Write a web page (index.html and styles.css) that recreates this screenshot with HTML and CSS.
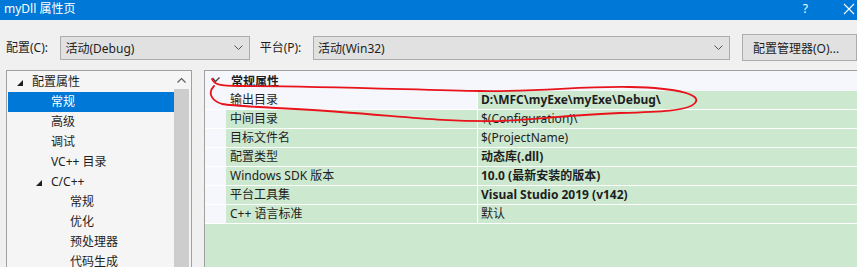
FILE: index.html
```html
<!DOCTYPE html>
<html lang="zh-CN">
<head>
  <meta charset="UTF-8">
  <title>myDll 属性页</title>
  <link rel="stylesheet" href="styles.css">
</head>
<body>
  <div class="window">
    <div class="titlebar">
      <span class="title">myDll 属性页</span>
      <span class="help">?</span>
      <svg class="close" width="12" height="12" viewBox="0 0 12 12">
        <path d="M1 1 L11 11 M11 1 L1 11" stroke="#fff" stroke-width="1.1" fill="none"/>
      </svg>
    </div>

    <div class="toolbar">
      <span class="label label-config">配置(C):</span>
      <div class="combo combo-config">
        <span>活动(Debug)</span>
        <svg class="combo-arrow" width="9" height="5" viewBox="0 0 9 5"><path d="M0.5 0.5 L4.5 4.5 L8.5 0.5" stroke="#555" fill="none"/></svg>
      </div>
      <span class="label label-platform">平台(P):</span>
      <div class="combo combo-platform">
        <span>活动(Win32)</span>
        <svg class="combo-arrow" width="9" height="5" viewBox="0 0 9 5"><path d="M0.5 0.5 L4.5 4.5 L8.5 0.5" stroke="#555" fill="none"/></svg>
      </div>
      <button class="btn-manager">配置管理器(O)...</button>
    </div>

    <div class="main">
      <div class="tree">
        <ul class="tree-list">
          <li class="lv0"><span class="tri"></span>配置属性</li>
          <li class="lv1 selected">常规</li>
          <li class="lv1">高级</li>
          <li class="lv1">调试</li>
          <li class="lv1">VC++ 目录</li>
          <li class="lv1 has-tri"><span class="tri"></span>C/C++</li>
          <li class="lv2">常规</li>
          <li class="lv2">优化</li>
          <li class="lv2">预处理器</li>
          <li class="lv2">代码生成</li>
        </ul>
        <div class="scrollbar">
          <div class="scroll-up">
            <svg width="9" height="5" viewBox="0 0 9 5"><path d="M0.5 4.5 L4.5 0.5 L8.5 4.5" stroke="#606060" stroke-width="1.2" fill="none"/></svg>
          </div>
          <div class="scroll-thumb"></div>
        </div>
      </div>

      <div class="grid">
        <div class="grid-header">
          <svg class="chevron" width="8" height="6" viewBox="0 0 8 6"><path d="M0.5 1 L3.5 4.5 L7.5 0.5" stroke="#444" stroke-width="1.3" fill="none"/></svg>
          <span>常规属性</span>
        </div>
        <div class="row first">
          <div class="gutter"></div>
          <div class="name">输出目录</div>
          <div class="value bold">D:\MFC\myExe\myExe\Debug\</div>
        </div>
        <div class="row">
          <div class="gutter"></div>
          <div class="name">中间目录</div>
          <div class="value">$(Configuration)\</div>
        </div>
        <div class="row">
          <div class="gutter"></div>
          <div class="name">目标文件名</div>
          <div class="value">$(ProjectName)</div>
        </div>
        <div class="row">
          <div class="gutter"></div>
          <div class="name">配置类型</div>
          <div class="value bold">动态库(.dll)</div>
        </div>
        <div class="row">
          <div class="gutter"></div>
          <div class="name">Windows SDK 版本</div>
          <div class="value bold">10.0 (最新安装的版本)</div>
        </div>
        <div class="row">
          <div class="gutter"></div>
          <div class="name">平台工具集</div>
          <div class="value bold">Visual Studio 2019 (v142)</div>
        </div>
        <div class="row">
          <div class="gutter"></div>
          <div class="name">C++ 语言标准</div>
          <div class="value">默认</div>
        </div>
        <div class="grid-fill"></div>
      </div>
    </div>

    <!-- hand-drawn red annotation -->
    <svg class="annotation" width="857" height="267" viewBox="0 0 857 267">
      <path d="M212 79 C214 84 218 86 240 86 C320 86 420 90 480 91 C540 92 580 86 630 87 C680 88 702 95 695 103 C688 111 660 112 620 113 C570 115 540 119 500 121 C440 122 400 116 340 112 C290 108 240 107 222 104 C210 100 208 92 214 86"
            stroke="#e8131b" stroke-width="1.8" fill="none" stroke-linecap="round"/>
    </svg>
  </div>
</body>
</html>
```

FILE: styles.css
```css
* {
  box-sizing: border-box;
}
body {
  margin: 0;
  background: #f0f0f0;
  font-family: "Segoe UI", "Noto Sans", "Noto Sans CJK SC", sans-serif;
  font-size: 12px;
  color: #1e1e1e;
}
.window {
  position: relative;
  width: 857px;
  height: 267px;
  overflow: hidden;
}

/* title bar */
.titlebar {
  height: 20px;
  background: #0078d7;
  color: #fff;
  display: flex;
  align-items: center;
  padding-left: 4px;
}
.title {
  font-size: 12px;
  line-height: 16px;
  margin-top: -3px;
}
.help {
  margin-left: auto;
  font-size: 12px;
  margin-top: -3px;
}
.close {
  margin-left: 35px;
  margin-right: 2px;
  margin-top: -3px;
}

/* config toolbar */
.toolbar {
  display: flex;
  align-items: center;
  height: 27px;
  margin-top: 14px;
  padding-left: 6px;
}
.label {
  line-height: 16px;
}
.label-config {
  width: 55px;
}
.label-platform {
  width: 54px;
}
.combo {
  height: 24px;
  background: #e1e1e1;
  border: 1px solid #adadad;
  display: flex;
  align-items: center;
  padding-left: 4px;
  padding-right: 6px;
}
.combo span {
  flex: 1;
}
.combo-config {
  width: 191px;
  margin-right: 10px;
}
.combo-platform {
  width: 421px;
  margin-right: 12px;
}
.btn-manager {
  height: 27px;
  width: 115px;
  flex-shrink: 0;
  background: #e1e1e1;
  border: 1px solid #adadad;
  font-family: inherit;
  font-size: 12px;
  color: #1e1e1e;
  text-align: left;
  padding: 0 0 0 10px;
}

/* panels */
.main {
  display: flex;
  margin-top: 9px;
  padding-left: 6px;
  gap: 12px;
}
.tree {
  width: 186px;
  height: 220px;
  flex-shrink: 0;
  border: 1px solid #a0a0a0;
  background: #f5f5f5;
  display: flex;
}
.tree-list {
  list-style: none;
  margin: 0;
  padding: 1px 0 0 1px;
  width: 167px;
}
.tree-list li {
  height: 20px;
  line-height: 20px;
  display: flex;
  align-items: center;
  white-space: nowrap;
}
.tree-list .lv0 {
  padding-left: 9px;
}
.tree-list .lv1 {
  padding-left: 43px;
}
.tree-list .lv1.has-tri {
  padding-left: 28px;
}
.tree-list .lv2 {
  padding-left: 62px;
}
.tree-list .selected {
  background: #0078d7;
  color: #fff;
}
.tri {
  width: 0;
  height: 0;
  border-left: 6px solid transparent;
  border-bottom: 6px solid #1e1e1e;
  margin-right: 9px;
  margin-top: 2px;
}
.scrollbar {
  width: 17px;
  display: flex;
  flex-direction: column;
}
.scroll-up {
  height: 18px;
  width: 15px;
  display: flex;
  align-items: center;
  justify-content: center;
}
.scroll-thumb {
  flex: 1;
  width: 15px;
  background: #cdcdcd;
}

/* property grid */
.grid {
  flex: 1;
  height: 220px;
  border-left: 1px solid #a0a0a0;
  border-top: 1px solid #a0a0a0;
  background: #f5f7fd;
  display: flex;
  flex-direction: column;
}
.grid-header {
  height: 20px;
  display: flex;
  align-items: center;
  font-weight: bold;
  padding-left: 7px;
}
.chevron {
  margin-right: 11px;
  margin-top: -2px;
}
.row {
  height: 19px;
  display: flex;
  border-bottom: 1px solid #fff;
}
.gutter {
  width: 21px;
  background: #f5f7fd;
}
.name {
  width: 252px;
  background: #cce8cf;
  border-right: 1px solid #fff;
  padding-left: 4px;
  line-height: 18px;
  white-space: nowrap;
}
.row.first .name {
  background: #f5f7fd;
}
.value {
  flex: 1;
  background: #cce8cf;
  padding-left: 3px;
  line-height: 18px;
  white-space: nowrap;
}
.bold {
  font-weight: bold;
}
.grid-fill {
  flex: 1;
  background: #cce8cf;
}

.annotation {
  position: absolute;
  left: 0;
  top: 0;
  pointer-events: none;
}
```
